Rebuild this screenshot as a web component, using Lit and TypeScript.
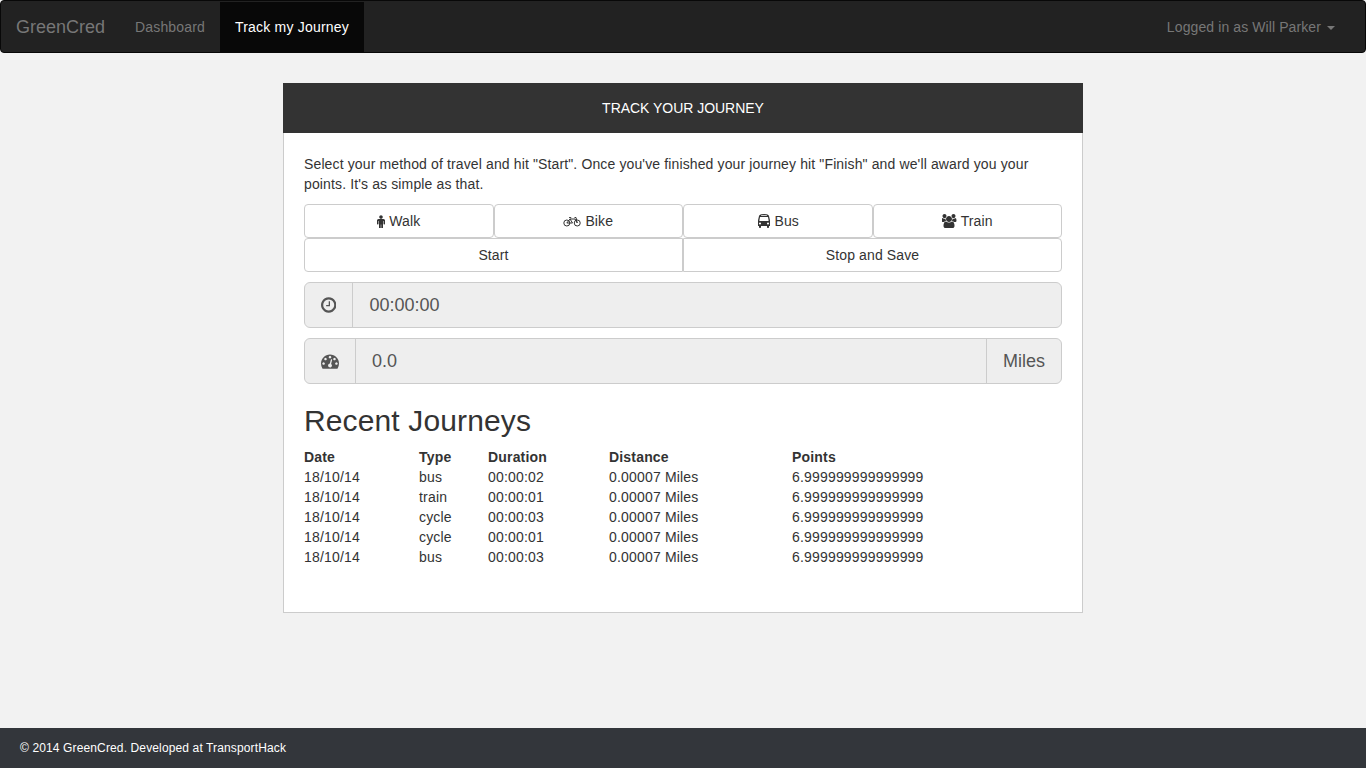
import { LitElement, html, svg, css } from 'lit';
import { customElement } from 'lit/decorators.js';

const journeys = [
  { date: '18/10/14', type: 'bus', duration: '00:00:02' },
  { date: '18/10/14', type: 'train', duration: '00:00:01' },
  { date: '18/10/14', type: 'cycle', duration: '00:00:03' },
  { date: '18/10/14', type: 'cycle', duration: '00:00:01' },
  { date: '18/10/14', type: 'bus', duration: '00:00:03' },
];

const icons = {
  male: { w: 1024, d: 'M1024 832v416q0 40-28 68t-68 28-68-28-28-68v-352h-64v912q0 46-33 79t-79 33-79-33-33-79v-464h-64v464q0 46-33 79t-79 33-79-33-33-79v-912h-64v352q0 40-28 68t-68 28-68-28-28-68v-416q0-80 56-136t136-56h640q80 0 136 56t56 136zm-288-448q0 93-65.500 158.500t-158.500 65.500-158.500-65.500-65.500-158.500 65.500-158.500 158.500-65.500 158.500 65.500 65.500 158.500z' },
  bus: { w: 1792, d: 'M512 1216q0-53-37.500-90.500t-90.500-37.500-90.500 37.500-37.500 90.500 37.500 90.500 90.500 37.500 90.500-37.500 37.500-90.500zm1024 0q0-53-37.500-90.500t-90.500-37.500-90.500 37.500-37.500 90.500 37.500 90.500 90.500 37.500 90.500-37.500 37.500-90.500zm-46-396l-72-384q-5-23-22.500-37.500t-40.500-14.500h-918q-23 0-40.500 14.500t-22.500 37.500l-72 384q-5 30 14 53t49 23h1062q30 0 49-23t14-53zm-226-612q0-20-14-34t-34-14h-640q-20 0-34 14t-14 34 14 34 34 14h640q20 0 34-14t14-34zm400 725v603h-128v128q0 53-37.500 90.500t-90.500 37.500-90.500-37.500-37.500-90.500v-128h-768v128q0 53-37.500 90.500t-90.500 37.500-90.500-37.500-37.500-90.500v-128h-128v-603q0-112 25-223l103-454q9-78 97.500-137t230-89 312.500-30 312.500 30 230 89 97.500 137l105 454q23 102 23 223z' },
  users: { w: 1920, d: 'M529 896q-162 5-265 128h-134q-82 0-138-40.500t-56-118.500q0-353 124-353 6 0 43.500 21t97.500 42.500 119 21.500q67 0 133-23-5 37-5 66 0 139 81 256zm1071 637q0 120-73 189.500t-194 69.500h-874q-121 0-194-69.500t-73-189.500q0-53 3.500-103.500t14-109 26.500-108.500 43-97.500 62-81 85.500-53.500 111.500-20q10 0 43 21.500t73 48 107 48 135 21.500 135-21.500 107-48 73-48 43-21.500q61 0 111.500 20t85.500 53.500 62 81 43 97.500 26.500 108.500 14 109 3.500 103.500zm-1024-1277q0 106-75 181t-181 75-181-75-75-181 75-181 181-75 181 75 75 181zm704 384q0 159-112.500 271.500t-271.500 112.500-271.500-112.500-112.500-271.500 112.500-271.500 271.500-112.500 271.500 112.500 112.500 271.500zm576 225q0 78-56 118.500t-138 40.500h-134q-103-123-265-128 81-117 81-256 0-29-5-66 66 23 133 23 59 0 119-21.500t97.500-42.500 43.500-21q124 0 124 353zm-128-609q0 106-75 181t-181 75-181-75-75-181 75-181 181-75 181 75 75 181z' },
  clock: { w: 1536, d: 'M896 544v448q0 14-9 23t-23 9h-320q-14 0-23-9t-9-23v-64q0-14 9-23t23-9h224v-352q0-14 9-23t23-9h64q14 0 23 9t9 23zm416 352q0-148-73-273t-198-198-273-73-273 73-198 198-73 273 73 273 198 198 273 73 273-73 198-198 73-273zm224 0q0 209-103 385.500t-279.500 279.500-385.500 103-385.500-103-279.500-279.500-103-385.500 103-385.500 279.500-279.500 385.500-103 385.500 103 279.500 279.500 103 385.500z' },
  gauge: { w: 1792, d: 'M384 1152q0-53-37.500-90.500t-90.500-37.500-90.500 37.500-37.500 90.500 37.500 90.500 90.500 37.500 90.500-37.500 37.500-90.500zm192-448q0-53-37.500-90.500t-90.500-37.500-90.500 37.500-37.500 90.500 37.500 90.500 90.500 37.500 90.500-37.500 37.500-90.500zm428 481l101-382q6-26-7.500-48.500t-38.500-29.500-48 6.500-30 39.500l-101 382q-60 5-107 43.500t-63 98.500q-20 77 20 146t117 89 146-20 89-117q16-60-6-117t-72-91zm660-33q0-53-37.500-90.500t-90.500-37.500-90.500 37.500-37.500 90.500 37.500 90.500 90.500 37.500 90.500-37.500 37.500-90.500zm-640-640q0-53-37.500-90.500t-90.500-37.500-90.500 37.500-37.500 90.500 37.500 90.500 90.500 37.500 90.500-37.500 37.500-90.500zm448 192q0-53-37.500-90.500t-90.500-37.500-90.500 37.500-37.500 90.500 37.500 90.500 90.500 37.500 90.500-37.500 37.500-90.500zm320 448q0 261-141 483-19 29-54 29h-1402q-35 0-54-29-141-221-141-483 0-182 71-348t191-286 286-191 348-71 348 71 286 191 191 286 71 348z' },
};

function faIcon(name: keyof typeof icons) {
  const { w, d } = icons[name];
  return html`<svg class="fa" style="width:${w / 1792}em" viewBox="0 0 ${w} 1792" fill="currentColor">${svg`<path d=${d}></path>`}</svg>`;
}

// no single path for this one, two wheels and a frame
const bikeIcon = html`<svg class="fa" style="width:1.29em" viewBox="0 0 18 14" fill="none" stroke="currentColor" stroke-width="1">
  <circle cx="3.8" cy="9" r="3"></circle>
  <circle cx="14.2" cy="9" r="3"></circle>
  <path d="M3.800 9 7 5h5l2.200 4M7 5l2.500 4h-5.700M11.500 3.500H13L14.200 9M6 3.600h2.200"></path>
</svg>`;

@customElement('app-root')
export class AppRoot extends LitElement {
  static styles = css`
    :host {
      display: flex;
      flex-direction: column;
      min-height: 100vh;
      background: #f2f2f2;
      color: #333;
      font: 14px/20px 'Liberation Sans', Arial, sans-serif;
    }

    * {
      box-sizing: border-box;
    }

    .fa {
      display: inline-block;
      height: 1em;
      vertical-align: -0.14em;
    }

    .navbar {
      display: flex;
      height: 53px;
      margin-bottom: 30px;
      background: #222;
      border: 1px solid #080808;
      border-radius: 4px;
      color: #777;
      letter-spacing: 0.16px;
    }

    .navbar a {
      display: block;
      margin-top: 1px;
      padding: 15px;
      line-height: 20px;
    }

    .navbar .brand {
      font-size: 18px;
      letter-spacing: 0;
    }

    .navbar .active {
      background: #080808;
      color: #fff;
      letter-spacing: 0.2px;
    }

    .navbar .right {
      margin-left: auto;
      margin-right: 15px;
      letter-spacing: 0.1px;
    }

    .caret {
      display: inline-block;
      width: 0;
      height: 0;
      margin-left: 2px;
      vertical-align: middle;
      border-top: 4px solid;
      border-left: 4px solid transparent;
      border-right: 4px solid transparent;
    }

    main {
      flex: 1;
    }

    .card {
      width: 800px;
      margin: 0 auto;
      background: #fff;
    }

    .card-head {
      height: 50px;
      line-height: 50px;
      text-align: center;
      background: #333;
      color: #fff;
      text-transform: uppercase;
      letter-spacing: -0.03px;
    }

    .card-body {
      padding: 21px 20px 45px;
      border: 1px solid #ccc;
      border-top: 0;
    }

    p {
      margin: 0 0 10px;
      letter-spacing: 0.13px;
    }

    .btn-row {
      display: flex;
    }

    .btn {
      flex: 1 1 0;
      height: 34px;
      line-height: 32px;
      text-align: center;
      background: #fff;
      border: 1px solid #ccc;
      border-radius: 4px;
      letter-spacing: 0.12px;
    }

    .btn-row.joined .btn:first-child {
      border-radius: 4px 0 0 4px;
    }

    .btn-row.joined .btn:last-child {
      border-radius: 0 4px 4px 0;
    }

    .group {
      display: flex;
      height: 46px;
      margin-top: 10px;
      font-size: 18px;
      line-height: 24px;
      color: #555;
      background: #eee;
      border: 1px solid #ccc;
      border-radius: 6px;
    }

    .addon {
      padding: 10px 16px;
      border-right: 1px solid #ccc;
    }

    .addon:last-child {
      border-right: 0;
      border-left: 1px solid #ccc;
    }

    .value {
      flex: 1;
      padding: 10px 16px;
    }

    h2 {
      margin: 20px 0 10px;
      font-size: 30px;
      font-weight: 500;
      line-height: 33px;
      letter-spacing: 0.13px;
    }

    table {
      width: 100%;
      border-collapse: collapse;
      table-layout: fixed;
      letter-spacing: 0.18px;
    }

    th,
    td {
      padding: 0;
      text-align: left;
    }

    footer {
      height: 40px;
      padding: 0 20px;
      line-height: 40px;
      font-size: 12px;
      color: #fff;
      background: #33363b;
      letter-spacing: 0.13px;
    }
  `;

  render() {
    return html`
      <nav class="navbar">
        <a class="brand">GreenCred</a>
        <a>Dashboard</a>
        <a class="active">Track my Journey</a>
        <a class="right">Logged in as Will Parker <span class="caret"></span></a>
      </nav>
      <main>
        <section class="card">
          <div class="card-head">Track your journey</div>
          <div class="card-body">
            <p>Select your method of travel and hit "Start". Once you've finished your journey hit "Finish" and we'll award you your points. It's as simple as that.</p>
            <div class="btn-row">
              <div class="btn">${faIcon('male')} Walk</div>
              <div class="btn">${bikeIcon} Bike</div>
              <div class="btn">${faIcon('bus')} Bus</div>
              <div class="btn">${faIcon('users')} Train</div>
            </div>
            <div class="btn-row joined">
              <div class="btn">Start</div>
              <div class="btn">Stop and Save</div>
            </div>
            <div class="group">
              <div class="addon">${faIcon('clock')}</div>
              <div class="value">00:00:00</div>
            </div>
            <div class="group">
              <div class="addon">${faIcon('gauge')}</div>
              <div class="value">0.0</div>
              <div class="addon">Miles</div>
            </div>
            <h2>Recent Journeys</h2>
            <table>
              <colgroup>
                <col style="width:115px" />
                <col style="width:69px" />
                <col style="width:121px" />
                <col style="width:183px" />
                <col />
              </colgroup>
              <thead>
                <tr><th>Date</th><th>Type</th><th>Duration</th><th>Distance</th><th>Points</th></tr>
              </thead>
              <tbody>
                ${journeys.map(
                  (j) => html`<tr>
                    <td>${j.date}</td>
                    <td>${j.type}</td>
                    <td>${j.duration}</td>
                    <td>0.00007 Miles</td>
                    <td>6.999999999999999</td>
                  </tr>`
                )}
              </tbody>
            </table>
          </div>
        </section>
      </main>
      <footer>© 2014 GreenCred. Developed at TransportHack</footer>
    `;
  }
}
